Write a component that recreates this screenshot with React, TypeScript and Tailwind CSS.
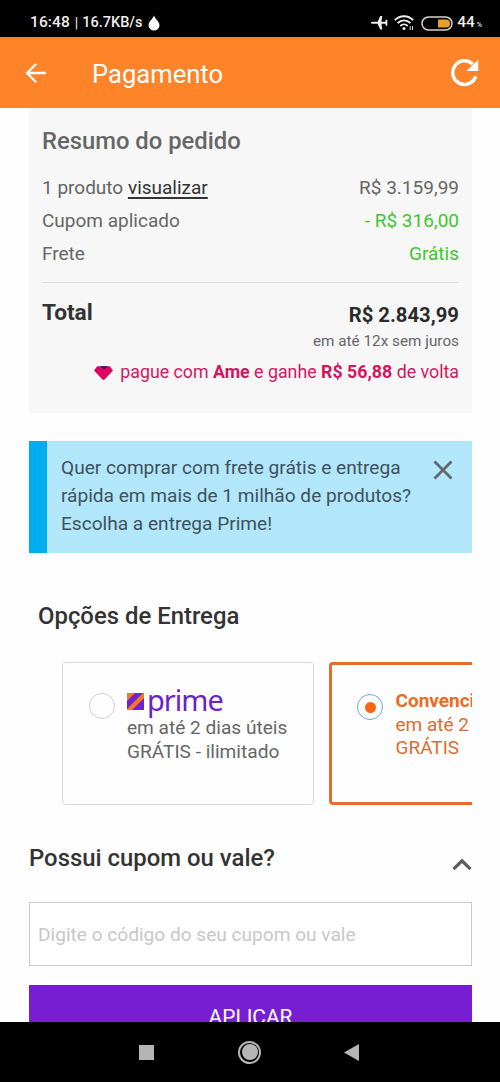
import React from "react";

function StatusBar() {
  return (
    <div className="flex h-[37px] shrink-0 items-center bg-black pl-[30px] pr-[18px] pt-[9px] text-[#efefef]">
      <span className="text-[15.5px] font-medium leading-none tracking-[0.1px]">16:48</span>
      <span className="ml-[5px] text-[14px] leading-none">|</span>
      <span className="ml-[4px] text-[14.5px] font-medium leading-none">16.7KB/s</span>
      <svg className="ml-[6px] h-[16px] w-[12px]" viewBox="0 0 12 16" fill="#fff">
        <path d="M6 0.5C7.2 4 11.5 6.6 11.5 10.3A5.5 5.2 0 0 1 .5 10.3C.5 6.6 4.8 4 6 .5Z" />
      </svg>
      <div className="ml-auto flex items-center">
        <svg className="h-[16px] w-[17px]" viewBox="0 0 17 16" fill="#efefef">
          <path d="M0 7.3 1.6 6.8H6.6L9.3 1H11.3L10.4 6.8H14.2L15 4.8H16.3V10.8H15L14.2 8.8H10.4L11.3 14.6H9.3L6.6 8.8H1.6L0 8.3Z" />
        </svg>
        <svg className="ml-[6px] h-[16px] w-[21px]" viewBox="0 0 21 16" fill="none" stroke="#efefef" strokeWidth="1.8">
          <path d="M.8 5.2C6-.1 14-.1 19.2 5.2" />
          <path d="M3.6 8.2C7.2 4.5 12.8 4.5 16.4 8.2" />
          <path d="M6.3 11C8.6 8.7 11.4 8.7 13.7 11" />
          <circle cx="10" cy="13.6" r="1.5" fill="#efefef" stroke="none" />
          <path d="M16.2 11.2V15M18.6 11.2V15" strokeWidth="1" />
        </svg>
        <svg className="ml-[6px] h-[15px] w-[32px]" viewBox="0 0 32 15" fill="none">
          <rect x="1" y="1" width="30" height="13" rx="6.5" stroke="#d8d2cc" strokeWidth="1.5" />
          <path d="M17 3.5H25A4 4 0 0 1 25 11.5H17Z" fill="#e6a02c" />
        </svg>
        <span className="ml-[4px] text-[15.5px] font-medium leading-none">44</span>
        <span className="ml-[2px] mt-[4px] text-[7px] font-medium leading-none">%</span>
      </div>
    </div>
  );
}

function Header() {
  return (
    <header className="flex h-[71px] shrink-0 items-center bg-[#ff8329] pl-[25px] pr-[21px] text-white">
      <svg className="h-[22px] w-[22px]" viewBox="0 0 22 22" fill="none" stroke="#fff" strokeWidth="2.3">
        <path d="M21 11H2.2M11.2 1.8 2 11 11.2 20.2" />
      </svg>
      <h1 className="ml-[45px] mt-[5px] text-[25.6px] leading-none">Pagamento</h1>
      <svg className="ml-auto h-[29px] w-[29px]" viewBox="0 0 30 30" fill="none">
        <path d="M26.6 19A12.2 12.2 0 1 1 23.5 6.3" stroke="#fff" strokeWidth="3.6" />
        <path d="M29.2 1.5V13.5H17Z" fill="#fff" />
      </svg>
    </header>
  );
}

function Row({ label, value, tone }: { label: React.ReactNode; value: string; tone: string }) {
  return (
    <div className="flex h-[33.3px] items-center justify-between text-[19px] leading-none">
      <span>{label}</span>
      <span className={tone}>{value}</span>
    </div>
  );
}

function Summary() {
  return (
    <section className="h-[305px] shrink-0 bg-[#f7f7f7] px-[13px] pt-[18px] text-[#666]">
      <h2 className="h-[28px] whitespace-nowrap text-[23.8px] font-medium leading-[30px]">Resumo do pedido</h2>
      <div className="mt-[16.4px]">
        <Row
          label={<>1 produto <a className="text-[#333] underline decoration-[1.5px] underline-offset-[3px]">visualizar</a></>}
          value="R$ 3.159,99"
          tone=""
        />
        <Row label="Cupom aplicado" value="- R$ 316,00" tone="text-[#41c52e]" />
        <Row label="Frete" value="Grátis" tone="text-[#41c52e]" />
      </div>
      <hr className="mt-[11.7px] border-0 border-t-[1.5px] border-[#dcdcdc]" />
      <div className="mt-[17px] flex justify-between text-[#333]">
        <span className="text-[22.7px] font-bold leading-[26px]">Total</span>
        <span className="mt-[2px] text-[20.3px] font-bold leading-[26px] text-[#2b2b2b]">R$ 2.843,99</span>
      </div>
      <p className="mt-px text-right text-[15.3px] leading-[24px]">em até 12x sem juros</p>
      <p className="mt-[7px] flex items-center justify-end whitespace-pre text-[17.8px] leading-[24px] text-[#d3165f]">
        <svg className="mr-[7px] mt-[3px] h-[14px] w-[19px]" viewBox="0 0 19 14">
          <path d="M3.2.3H15.8L19 4.4 10.8 13.3Q9.5 14.5 8.2 13.3L0 4.4Z" fill="#dd0560" />
          <path d="M6 .3H14L10.3 3.6Z" fill="#2d196f" />
        </svg>
        <span>pague com <b>Ame</b> e ganhe <b>R$ 56,88</b> de volta</span>
      </p>
    </section>
  );
}

function Notice() {
  return (
    <section className="mt-[28px] flex h-[112px] shrink-0 border-l-[18px] border-[#00aeef] bg-[#b1e6fb] pl-[14px] pr-[19px] pt-[13px] text-[#3f525c]">
      <p className="whitespace-nowrap text-[19.1px] leading-[28px]">
        Quer comprar com frete grátis e entrega<br />
        rápida em mais de 1 milhão de produtos?<br />
        Escolha a entrega Prime!
      </p>
      <svg className="ml-auto mt-[6px] h-[20px] w-[20px] shrink-0" viewBox="0 0 20 20" stroke="#5f6a70" strokeWidth="2.8">
        <path d="M1.5 1.5 18.5 18.5M18.5 1.5 1.5 18.5" />
      </svg>
    </section>
  );
}

function Options() {
  return (
    <section className="mt-[47px] shrink-0">
      <h2 className="ml-[9px] whitespace-nowrap text-[23.9px] font-medium leading-[32px] text-[#333]">Opções de Entrega</h2>
      <div className="mt-[30px] flex overflow-hidden pl-[33px]">
        <div className="flex h-[143px] w-[252px] shrink-0 rounded-[4px] border-[1.5px] border-[#d9d9d9] pl-[26px] pt-[24px] text-[#666]">
          <span className="mt-[6px] h-[26px] w-[26px] shrink-0 rounded-full border-[1.5px] border-[#cdcdd3]" />
          <div className="ml-[12px] whitespace-nowrap text-[19.1px] leading-[24px]">
            <div className="flex h-[29px] items-start text-[#6a22c9]">
              <svg className="mt-[6px] h-[17px] w-[17px]" viewBox="0 0 17 17">
                <rect width="17" height="17" fill="#7420cc" />
                <path d="M0 0H8L0 8ZM17 0V5L5 17H0V16L16 0Z" fill="#f27a23" />
              </svg>
              <span className="ml-[3px] font-['Noto_Sans',sans-serif] text-[29px] leading-[26px] tracking-[-1px]">prime</span>
            </div>
            <p>em até 2 dias úteis</p>
            <p>GRÁTIS - ilimitado</p>
          </div>
        </div>
        <div className="ml-[15px] flex h-[143px] w-[253px] shrink-0 rounded-[4px] border-[3px] border-[#e36f2c] pl-[25px] pt-[24px] text-[#dc6d30]">
          <span className="mt-[5px] flex h-[26px] w-[26px] shrink-0 items-center justify-center rounded-full border-[1.5px] border-[#79a5d3]">
            <span className="h-[11px] w-[11px] rounded-full bg-[#f56713]" />
          </span>
          <div className="ml-[12.5px] whitespace-nowrap text-[19px] leading-[23.5px]">
            <p className="font-bold text-[#ed6b20]">Convencional</p>
            <p>em até 2 dias úteis</p>
            <p>GRÁTIS</p>
          </div>
        </div>
      </div>
    </section>
  );
}

function Coupon() {
  return (
    <section className="mt-[37px] shrink-0">
      <div className="flex h-[32px] items-center justify-between">
        <h2 className="whitespace-nowrap text-[23.9px] font-medium leading-[32px] text-[#333]">Possui cupom ou vale?</h2>
        <svg className="mt-[12px] h-[13px] w-[20px]" viewBox="0 0 20 13" fill="none" stroke="#5c5c5c" strokeWidth="3.2">
          <path d="M1.5 11.2 10 2.8 18.5 11.2" />
        </svg>
      </div>
      <input
        className="mt-[28px] block h-[64px] w-full border-[1.5px] border-[#ccc] bg-white pl-[8px] text-[19.1px] placeholder:text-[#c7c7c7] placeholder:opacity-100"
        placeholder="Digite o código do seu cupom ou vale"
      />
      <button className="mt-[19px] block h-[66px] w-full bg-[#781ed2] text-[20.9px] text-white">APLICAR</button>
    </section>
  );
}

function NavBar() {
  return (
    <nav className="flex h-[60px] shrink-0 items-center bg-black pl-[139px]">
      <span className="h-[15px] w-[15px] bg-[#b5b5b5]" />
      <span className="ml-[84px] flex h-[23px] w-[23px] items-center justify-center rounded-full border-2 border-[#b5b5b5]">
        <span className="h-[16px] w-[16px] rounded-full bg-[#b5b5b5]" />
      </span>
      <svg className="ml-[83px] h-[17px] w-[15px]" viewBox="0 0 15 17">
        <path d="M15 0V17L0 8.5Z" fill="#b5b5b5" />
      </svg>
    </nav>
  );
}

export default function App() {
  return (
    <div className="flex h-[1082px] w-[500px] flex-col overflow-hidden bg-[#fefefe] font-['Roboto',sans-serif]">
      <StatusBar />
      <Header />
      <main className="flex min-h-0 flex-1 flex-col overflow-hidden pl-[29px] pr-[28px]">
        <Summary />
        <Notice />
        <Options />
        <Coupon />
      </main>
      <NavBar />
    </div>
  );
}
